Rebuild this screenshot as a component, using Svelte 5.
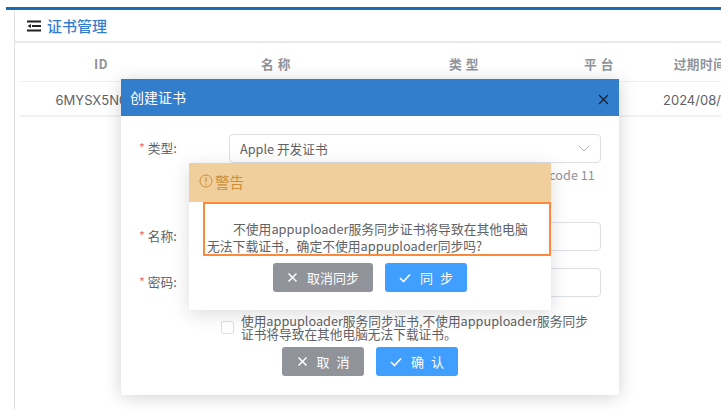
<script lang="ts">
  const columns = [
    { label: "ID", width: 162 },
    { label: "名 称", width: 188 },
    { label: "类 型", width: 188 },
    { label: "平 台", width: 82 },
    { label: "过期时间", width: 120 }
  ];
  const cells = ["6MYSX5N0GH", "", "", "", "2024/08/20"];
</script>

<div class="page">
  <div class="panel">
    <div class="title">
      <svg class="menu" width="14" height="12" viewBox="0 0 14 12">
        <path d="M0 1.500h14M5 6h9M0 10.500h14" stroke="#222" stroke-width="2" fill="none" />
        <path d="M.5 6l3.500-2v4z" fill="#222" />
      </svg>
      <span>证书管理</span>
    </div>
    <div class="table">
      <div class="row head">
        {#each columns as col}
          <div class="cell" style="width: {col.width}px">{col.label}</div>
        {/each}
      </div>
      <div class="row body">
        {#each cells as text, i}
          <div class="cell" style="width: {columns[i].width}px">{text}</div>
        {/each}
      </div>
    </div>
  </div>

  <div class="dialog">
    <div class="dialog-head">
      <span>创建证书</span>
      <svg width="11" height="11" viewBox="0 0 11 11">
        <path d="M1 1l9 9M10 1l-9 9" stroke="#10243a" stroke-width="1.300" fill="none" />
      </svg>
    </div>
    <div class="dialog-body">
      <div class="field">
        <label><i>*</i> 类型:</label>
        <div class="select">
          <span>Apple 开发证书</span>
          <svg width="12" height="7" viewBox="0 0 12 7">
            <path d="M1 1l5 5 5-5" stroke="#b5b8bf" stroke-width="1" fill="none" />
          </svg>
        </div>
      </div>
      <div class="hint">Xcode 11</div>
      <div class="field name-field">
        <label><i>*</i> 名称:</label>
        <div class="input"></div>
      </div>
      <div class="field pass-field">
        <label><i>*</i> 密码:</label>
        <div class="input"></div>
      </div>
      <div class="check">
        <span class="box"></span>
        <p>使用appuploader服务同步证书,不使用appuploader服务同步证书将导致在其他电脑无法下载证书。</p>
      </div>
      <div class="actions">
        <button class="btn grey">
          <svg width="11" height="11" viewBox="0 0 11 11"><path d="M1.500 1.500l8 8M9.500 1.500l-8 8" stroke="#fff" stroke-width="1.500" fill="none" /></svg>
          <span class="wide">取 消</span>
        </button>
        <button class="btn blue">
          <svg width="12" height="10" viewBox="0 0 12 10"><path d="M1 5l3.500 3.500L11 1.500" stroke="#fff" stroke-width="1.600" fill="none" /></svg>
          <span class="wide">确 认</span>
        </button>
      </div>
    </div>
  </div>

  <div class="alert">
    <div class="alert-head">
      <svg width="14" height="14" viewBox="0 0 14 14">
        <circle cx="7" cy="7" r="6" stroke="#c98f3a" stroke-width="1" fill="none" />
        <path d="M7 3.500v4.500M7 9.500v1.200" stroke="#c98f3a" stroke-width="1.200" fill="none" />
      </svg>
      <span>警告</span>
    </div>
    <div class="message">
      <p>不使用appuploader服务同步证书将导致在其他电脑无法下载证书，确定不使用appuploader同步吗?</p>
    </div>
    <div class="actions alert-actions">
      <button class="btn grey sync-cancel">
        <svg width="11" height="11" viewBox="0 0 11 11"><path d="M1.500 1.500l8 8M9.500 1.500l-8 8" stroke="#fff" stroke-width="1.500" fill="none" /></svg>
        <span>取消同步</span>
      </button>
      <button class="btn blue sync-ok">
        <svg width="12" height="10" viewBox="0 0 12 10"><path d="M1 5l3.500 3.500L11 1.500" stroke="#fff" stroke-width="1.600" fill="none" /></svg>
        <span class="wide">同 步</span>
      </button>
    </div>
  </div>
</div>

<style>
  :global(body) {
    margin: 0;
    background: #fff;
  }
  .page {
    position: relative;
    width: 721px;
    height: 409px;
    overflow: hidden;
    padding-top: 7px;
    box-sizing: border-box;
    font-family: "Noto Sans CJK SC", "Inter", sans-serif;
    color: #606266;
  }
  .panel {
    margin-left: 6px;
    height: 402px;
    border-top: 3px solid #1a6bb5;
    padding-left: 8px;
    box-sizing: border-box;
  }
  .title {
    height: 31px;
    border-left: 1px solid #dcdfe6;
    border-bottom: 2px solid #e8e8e8;
    display: flex;
    align-items: center;
    gap: 6px;
    padding-left: 12px;
    font-size: 15px;
    color: #337ecc;
    font-weight: 500;
  }
  .table {
    border-left: 1px solid #dcdfe6;
    height: 370px;
    padding-left: 5px;
    box-sizing: border-box;
  }
  .row {
    display: flex;
    border-bottom: 1px solid #ebeef5;
  }
  .head {
    height: 39px;
    box-sizing: border-box;
    padding-top: 2px;
    align-items: center;
    font-size: 12.700px;
    font-weight: 700;
    color: #909399;
    letter-spacing: 0.5px;
  }
  .body {
    height: 35px;
    box-sizing: border-box;
    padding-top: 2px;
    align-items: center;
    font-size: 13px;
    font-family: "Inter", sans-serif;
    border-bottom-width: 2px;
    border-color: #f0f2f5;
  }
  .cell {
    flex: none;
    text-align: center;
    white-space: nowrap;
    overflow: hidden;
  }
  .dialog {
    position: absolute;
    left: 121px;
    top: 79px;
    width: 498px;
    height: 316px;
    background: #fff;
    border-radius: 2px;
    box-shadow: 0 2px 18px rgba(0, 0, 0, 0.18);
  }
  .dialog-head {
    height: 37px;
    box-sizing: border-box;
    background: #337ecc;
    color: #fff;
    font-size: 14px;
    display: flex;
    align-items: center;
    justify-content: space-between;
    padding: 0 10px 2px 9px;
  }
  .dialog-head svg {
    margin-top: 6px;
  }
  .dialog-body {
    padding-top: 18px;
    font-size: 12.700px;
  }
  .field {
    display: flex;
    align-items: center;
    height: 29px;
    margin-left: 18px;
  }
  .field label {
    width: 90px;
    flex: none;
    padding-bottom: 2px;
  }
  .field i {
    color: #f56c6c;
    font-style: normal;
  }
  .select,
  .input {
    width: 372px;
    height: 29px;
    box-sizing: border-box;
    border: 1px solid #dcdfe6;
    border-radius: 4px;
    background: #fff;
  }
  .select {
    display: flex;
    align-items: center;
    justify-content: space-between;
    padding: 0 10px;
  }
  .hint {
    margin: 3px 0 0 421px;
    height: 17px;
    line-height: 17px;
    font-size: 12.700px;
    color: #909399;
    white-space: nowrap;
  }
  .name-field {
    margin-top: 39px;
  }
  .pass-field {
    margin-top: 17px;
  }
  .check {
    display: flex;
    align-items: center;
    gap: 7px;
    margin: 17px 0 0 100px;
    width: 376px;
  }
  .box {
    flex: none;
    width: 11px;
    height: 11px;
    border: 1px solid #dcdfe6;
    border-radius: 2px;
  }
  .check p {
    margin: 0;
    line-height: 13px;
    color: #606266;
  }
  .actions {
    display: flex;
    justify-content: center;
    gap: 12px;
    margin-top: 7px;
  }
  .btn {
    width: 82px;
    height: 29px;
    border: none;
    border-radius: 3px;
    padding: 0;
    color: #fff;
    font: inherit;
    font-size: 13px;
    display: flex;
    align-items: center;
    justify-content: center;
    gap: 9px;
  }
  .wide {
    word-spacing: 4px;
  }
  .grey {
    background: #909399;
  }
  .blue {
    background: #409eff;
  }
  .alert {
    position: absolute;
    left: 189px;
    top: 163px;
    width: 362px;
    height: 147px;
    background: #fff;
    box-shadow: 0 4px 18px rgba(0, 0, 0, 0.14);
  }
  .alert-head {
    height: 39px;
    box-sizing: border-box;
    background: #f0cf9c;
    color: #c98f3a;
    font-size: 14.500px;
    display: flex;
    align-items: center;
    gap: 2px;
    padding: 0 0 3px 10px;
  }
  .message {
    margin-left: 14px;
    height: 54px;
    box-sizing: border-box;
    border: 2px solid #fb8a3c;
    padding: 16px 17px 0 2px;
    font-size: 12.800px;
    line-height: 17px;
    color: #606266;
  }
  .message p {
    margin: 0;
    text-indent: 26px;
  }
  .alert-actions {
    margin-top: 7px;
  }
  .sync-cancel {
    width: 100px;
  }
  .sync-ok {
    width: 82px;
  }
</style>
